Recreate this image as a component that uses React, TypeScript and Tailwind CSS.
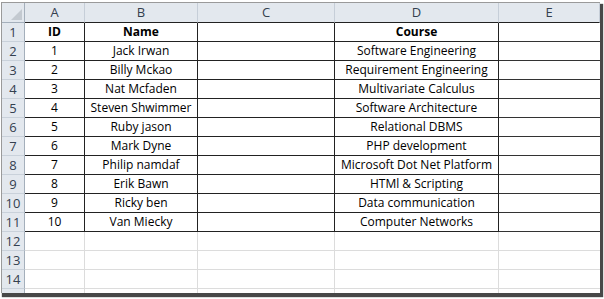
const rows = [
  { id: 'ID', name: 'Name', course: 'Course', bold: true },
  { id: '1', name: 'Jack Irwan', course: 'Software Engineering' },
  { id: '2', name: 'Billy Mckao', course: 'Requirement Engineering' },
  { id: '3', name: 'Nat Mcfaden', course: 'Multivariate Calculus' },
  { id: '4', name: 'Steven Shwimmer', course: 'Software Architecture' },
  { id: '5', name: 'Ruby jason', course: 'Relational DBMS' },
  { id: '6', name: 'Mark Dyne', course: 'PHP development' },
  { id: '7', name: 'Philip namdaf', course: 'Microsoft Dot Net Platform' },
  { id: '8', name: 'Erik Bawn', course: 'HTMl & Scripting' },
  { id: '9', name: 'Ricky ben', course: 'Data communication' },
  { id: '10', name: 'Van Miecky', course: 'Computer Networks' }
];

const cols = ['A', 'B', 'C', 'D', 'E'];
const gridCols = 'grid grid-cols-[23px_60px_113px_137px_164px_1fr]';

function HeaderCell({ label }: { label: string }) {
  return (
    <div className="flex items-center justify-center border-r border-b border-r-[#c6ced8] border-b-[#222] bg-[#e3e8ee] text-[13px] text-[#34404f]">
      {label}
    </div>
  );
}

function RowNum({ n }: { n: number }) {
  return (
    <div className="flex items-end justify-center border-r border-b border-r-[#a4afbb] border-b-[#c9d1da] bg-[#e3e8ee] pb-[2px] text-[13px] text-[#34404f]">
      {n}
    </div>
  );
}

export default function App() {
  return (
    <div className="h-[299px] w-[604px] overflow-hidden bg-white font-['Open_Sans',sans-serif] text-[12px] leading-none text-black">
      <div className="ml-px mt-[2px] h-[291px] w-[599px] overflow-hidden border-t border-l border-[#9a9a9a] shadow-[2px_3px_1px_1px_rgba(40,40,40,0.85)]">
        <div className={`${gridCols} h-[20px]`}>
          <div className="flex items-end justify-end border-r border-b border-r-[#a4afbb] border-b-[#a4afbb] bg-[#e3e8ee] p-[2px]">
            <svg width="11" height="11" viewBox="0 0 11 11">
              <path d="M11 0 L11 11 L0 11 Z" fill="#c3c9d0" />
            </svg>
          </div>
          {cols.map((c) => (
            <HeaderCell key={c} label={c} />
          ))}
        </div>

        {rows.map((r, i) => (
          <div key={i} className={`${gridCols} h-[19px]`}>
            <RowNum n={i + 1} />
            <div className={`flex items-center justify-center border-r border-b border-[#222] ${r.bold ? 'font-bold' : ''}`}>{r.id}</div>
            <div className={`flex items-center justify-center border-r border-b border-[#222] whitespace-nowrap ${r.bold ? 'font-bold' : ''}`}>{r.name}</div>
            <div className="border-r border-b border-[#222]" />
            <div className={`flex items-center justify-center border-r border-b border-[#222] whitespace-nowrap ${r.bold ? 'font-bold' : ''}`}>{r.course}</div>
            <div className="border-b border-[#333]" />
          </div>
        ))}

        {[12, 13, 14, 15].map((n) => (
          <div key={n} className={`${gridCols} h-[19px]`}>
            <RowNum n={n} />
            <div className="border-r border-b border-[#dcdcdc]" />
            <div className="border-r border-b border-[#dcdcdc]" />
            <div className="border-r border-b border-[#dcdcdc]" />
            <div className="border-r border-b border-[#dcdcdc]" />
            <div className="border-b border-[#dcdcdc]" />
          </div>
        ))}
      </div>
    </div>
  );
}
